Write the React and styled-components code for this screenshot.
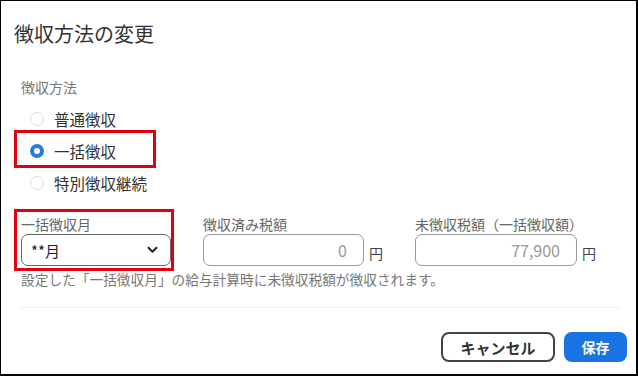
import styled, { createGlobalStyle } from 'styled-components'

const GlobalStyle = createGlobalStyle`
  html, body { margin: 0; padding: 0; background: #fff; }
  body { font-family: "Noto Sans CJK JP", "Noto Sans", sans-serif; color: #333; }
`

const Frame = styled.div`
  width: 638px;
  height: 376px;
  box-sizing: border-box;
  border: 1px solid #000;
  border-right-width: 2px;
  border-bottom-width: 2px;
  background: #fff;
  display: flex;
  flex-direction: column;
  padding: 19px 9px 0 13px;
`

const Title = styled.h2`
  margin: 0;
  font-size: 20px;
  line-height: 28px;
  font-weight: 400;
  color: #333;
`

const Content = styled.div`
  padding: 0 8px 0 7px;
  display: flex;
  flex-direction: column;
`

const SectionLabel = styled.div`
  margin-top: 29px;
  font-size: 14px;
  line-height: 20px;
  color: #777;
`

const RadioList = styled.div`
  margin-top: 6px;
  display: flex;
  flex-direction: column;
  padding-left: 9px;
`

const RadioItem = styled.label`
  position: relative;
  display: flex;
  align-items: center;
  gap: 10px;
  height: 32px;
  font-size: 15.5px;
  color: #333;

  ${({ $highlight }) => $highlight && `
    &::after {
      content: '';
      position: absolute;
      left: -16px;
      top: -5px;
      width: 142px;
      height: 38px;
      box-sizing: border-box;
      border: 3px solid #e0000f;
    }
  `}
`

const RadioDot = styled.span`
  width: 14px;
  height: 14px;
  box-sizing: border-box;
  border-radius: 50%;
  background: #fff;
  border: ${({ $checked }) => ($checked ? '4.5px solid #2b7bd6' : '1.5px solid #d8dee5')};
`

const FieldRow = styled.div`
  margin-top: 15px;
  display: flex;
  gap: 32px;
`

const Field = styled.div`
  position: relative;
  display: flex;
  flex-direction: column;

  ${({ $highlight }) => $highlight && `
    &::after {
      content: '';
      position: absolute;
      left: -7px;
      top: -5px;
      right: -3px;
      bottom: -5px;
      box-sizing: border-box;
      border: 3px solid #e0000f;
    }
  `}
`

const FieldLabel = styled.div`
  font-size: 14px;
  line-height: 20px;
  color: #666;
`

const InputLine = styled.div`
  display: flex;
  align-items: center;
  gap: 5px;
`

const Select = styled.div`
  width: 150px;
  height: 32px;
  box-sizing: border-box;
  border: 1px solid #666;
  border-radius: 7px;
  display: flex;
  align-items: center;
  justify-content: space-between;
  padding: 0 12px 0 9px;
  font-size: 15px;
  color: #222;
`

const AmountBox = styled.div`
  width: ${({ $w }) => $w}px;
  height: 32px;
  box-sizing: border-box;
  border: 1px solid #999;
  border-radius: 7px;
  display: flex;
  align-items: center;
  justify-content: flex-end;
  padding-right: 16px;
  font-size: 16px;
  color: #999;
`

const Unit = styled.span`
  font-size: 14px;
  color: #444;
  margin-top: 5px;
`

const Help = styled.div`
  margin-top: 3px;
  font-size: 13.7px;
  line-height: 20px;
  color: #777;
`

const Divider = styled.hr`
  margin: 18px 0 0;
  border: none;
  border-top: 1px solid #eceef0;
`

const Footer = styled.div`
  margin-top: 24px;
  display: flex;
  justify-content: flex-end;
  gap: 9px;
`

const Button = styled.button`
  height: 30px;
  box-sizing: border-box;
  border-radius: 8px;
  font-family: inherit;
  font-weight: 700;
  padding: 0;
  ${({ $primary }) => $primary ? `
    width: 63px;
    background: #1a73e3;
    border: none;
    color: #fff;
    font-size: 14px;
  ` : `
    width: 114px;
    background: #fff;
    border: 2px solid #444;
    color: #333;
    font-size: 15px;
  `}
`

const Chevron = () => (
  <svg width="11" height="8" viewBox="0 0 11 8">
    <path d="M1.5 1.8 L5.5 5.8 L9.5 1.8" fill="none" stroke="#222" strokeWidth="2" strokeLinecap="round" strokeLinejoin="round" />
  </svg>
)

const options = [
  { label: '普通徴収' },
  { label: '一括徴収', checked: true },
  { label: '特別徴収継続' },
]

export default function App() {
  return (
    <>
      <GlobalStyle />
      <Frame>
        <Title>徴収方法の変更</Title>
        <Content>
          <SectionLabel>徴収方法</SectionLabel>
          <RadioList>
            {options.map((o) => (
              <RadioItem key={o.label} $highlight={o.checked}>
                <RadioDot $checked={o.checked} />
                {o.label}
              </RadioItem>
            ))}
          </RadioList>

          <FieldRow>
            <Field $highlight>
              <FieldLabel>一括徴収月</FieldLabel>
              <Select>
                <span>**月</span>
                <Chevron />
              </Select>
            </Field>
            <Field>
              <FieldLabel>徴収済み税額</FieldLabel>
              <InputLine>
                <AmountBox $w={161}>0</AmountBox>
                <Unit>円</Unit>
              </InputLine>
            </Field>
            <Field>
              <FieldLabel>未徴収税額（一括徴収額）</FieldLabel>
              <InputLine>
                <AmountBox $w={162}>77,900</AmountBox>
                <Unit>円</Unit>
              </InputLine>
            </Field>
          </FieldRow>
          <Help>設定した「一括徴収月」の給与計算時に未徴収税額が徴収されます。</Help>
          <Divider />
        </Content>
        <Footer>
          <Button>キャンセル</Button>
          <Button $primary>保存</Button>
        </Footer>
      </Frame>
    </>
  )
}
